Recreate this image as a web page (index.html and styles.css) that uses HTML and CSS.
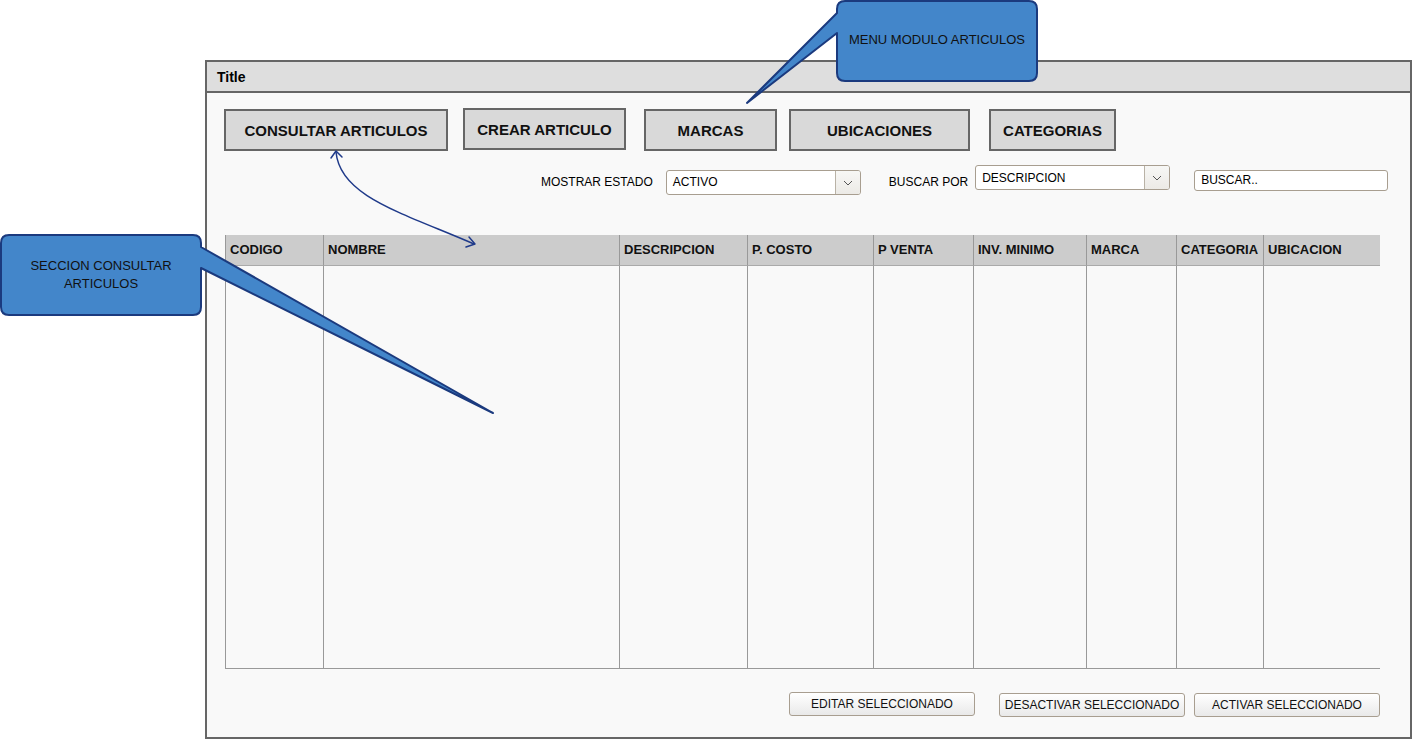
FILE: index.html
```html
<!DOCTYPE html>
<html lang="es">
<head>
<meta charset="utf-8">
<title>Articulos</title>
<link rel="stylesheet" href="styles.css">
</head>
<body>
<div class="canvas">
  <div class="window">
    <div class="titlebar">Title</div>
    <div class="win-body">
      <nav class="nav">
        <div class="nav-btn nav-consultar">CONSULTAR ARTICULOS</div>
        <div class="nav-btn nav-crear">CREAR ARTICULO</div>
        <div class="nav-btn nav-marcas">MARCAS</div>
        <div class="nav-btn nav-ubic">UBICACIONES</div>
        <div class="nav-btn nav-cat">CATEGORIAS</div>
      </nav>

      <div class="filters">
        <span class="flabel flabel-estado">MOSTRAR ESTADO</span>
        <div class="select select-estado">
          <span class="select-text">ACTIVO</span>
          <span class="select-arrow"><svg width="10" height="6" viewBox="0 0 10 6"><path d="M1 1 L5 5 L9 1" fill="none" stroke="#555" stroke-width="1"/></svg></span>
        </div>
        <span class="flabel flabel-buscar">BUSCAR POR</span>
        <div class="select select-buscar">
          <span class="select-text">DESCRIPCION</span>
          <span class="select-arrow"><svg width="10" height="6" viewBox="0 0 10 6"><path d="M1 1 L5 5 L9 1" fill="none" stroke="#555" stroke-width="1"/></svg></span>
        </div>
        <div class="search">BUSCAR..</div>
      </div>

      <div class="table">
        <div class="th">CODIGO</div>
        <div class="th">NOMBRE</div>
        <div class="th">DESCRIPCION</div>
        <div class="th">P. COSTO</div>
        <div class="th">P VENTA</div>
        <div class="th">INV. MINIMO</div>
        <div class="th">MARCA</div>
        <div class="th">CATEGORIA</div>
        <div class="th th-last">UBICACION</div>
        <div class="td"></div>
        <div class="td"></div>
        <div class="td"></div>
        <div class="td"></div>
        <div class="td"></div>
        <div class="td"></div>
        <div class="td"></div>
        <div class="td"></div>
        <div class="td td-last"></div>
      </div>

      <div class="actions">
        <div class="act-btn act-editar">EDITAR SELECCIONADO</div>
        <div class="act-btn act-desactivar">DESACTIVAR SELECCIONADO</div>
        <div class="act-btn act-activar">ACTIVAR SELECCIONADO</div>
      </div>
    </div>
  </div>

  <svg class="overlay" width="1412" height="739" viewBox="0 0 1412 739">
    <path class="callout-shape" d="M845 1 H1029 Q1037 1 1037 9 V73 Q1037 81 1029 81 H845 Q837 81 837 73 V33 L747 103 L837 13 V9 Q837 1 845 1 Z"/>
    <path class="callout-shape" d="M9 235 H193 Q201 235 201 243 V247 L493 413 L201 268 V307 Q201 315 193 315 H9 Q1 315 1 307 V243 Q1 235 9 235 Z"/>
    <path class="connector" d="M336 152 C340 196 400 212 474 244"/>
    <path class="connector" d="M331 158 L336 151 L342 157"/>
    <path class="connector" d="M466 247 L475 244 L469 237"/>
  </svg>

  <div class="callout-text callout-menu">MENU MODULO ARTICULOS</div>
  <div class="callout-text callout-seccion">SECCION CONSULTAR<br>ARTICULOS</div>
</div>
</body>
</html>
```

FILE: styles.css
```css
* { box-sizing: border-box; }

html, body {
  margin: 0;
  padding: 0;
  background: #ffffff;
}

body {
  font-family: "Liberation Sans", Arial, sans-serif;
  color: #000;
  width: 1412px;
  height: 739px;
  overflow: hidden;
}

.canvas {
  position: relative;
  width: 1412px;
  height: 739px;
  padding: 60px 0 0 205px;
}

.window {
  width: 1207px;
  height: 679px;
  border: 2px solid #666666;
  background: #f9f9f9;
  display: flex;
  flex-direction: column;
}

.titlebar {
  height: 31px;
  background: #dedede;
  border-bottom: 2px solid #666666;
  font-weight: bold;
  font-size: 14px;
  line-height: 29px;
  padding: 1px 0 0 10px;
}

.win-body {
  flex: 1;
  display: flex;
  flex-direction: column;
}

/* navigation buttons */
.nav {
  display: flex;
  align-items: flex-start;
  padding: 16px 0 0 17px;
}

.nav-btn {
  height: 42px;
  background: #d9d9d9;
  border: 2px solid #666666;
  font-weight: bold;
  font-size: 15px;
  display: flex;
  align-items: center;
  justify-content: center;
  color: #111;
}

.nav-consultar { width: 224px; }
.nav-crear { width: 163px; margin-left: 15px; margin-top: -1px; }
.nav-marcas { width: 133px; margin-left: 18px; }
.nav-ubic { width: 181px; margin-left: 12px; }
.nav-cat { width: 127px; margin-left: 19px; }

/* filters */
.filters {
  display: flex;
  align-items: flex-start;
  margin-top: 14px;
  padding-left: 334px;
  font-size: 12px;
  height: 30px;
}

.flabel {
  line-height: 24px;
  margin-top: 5px;
  white-space: nowrap;
}

.select {
  display: flex;
  height: 25px;
  width: 195px;
  border: 1px solid #a89e90;
  border-radius: 3px;
  background: #ffffff;
}

.select-estado { margin-left: 13px; margin-top: 5px; }
.flabel-buscar { margin-left: 28px; }
.select-buscar { margin-left: 7px; margin-top: 0; height: 25px; }

.select-text {
  flex: 1;
  padding-left: 6px;
  line-height: 23px;
}

.select-buscar .select-text { line-height: 24px; }

.select-arrow {
  width: 25px;
  border-left: 1px solid #b9b2a6;
  background: linear-gradient(#f7f7f5, #eceae6);
  border-radius: 0 2px 2px 0;
  display: flex;
  align-items: center;
  justify-content: center;
}

.search {
  margin-left: 24px;
  margin-top: 5px;
  width: 194px;
  height: 21px;
  border: 1px solid #a89e90;
  border-radius: 3px;
  background: #ffffff;
  padding-left: 6px;
  line-height: 19px;
}

/* table */
.table {
  margin: 40px 0 0 18px;
  width: 1155px;
  height: 434px;
  border-left: 1px solid #999999;
  border-bottom: 1px solid #999999;
  display: grid;
  grid-template-columns: 98px 296px 128px 126px 100px 113px 90px 87px 116px;
  grid-template-rows: 31px 1fr;
}

.th {
  background: #cccccc;
  border-right: 1px solid #999999;
  border-bottom: 1px solid #aaaaaa;
  font-weight: bold;
  font-size: 13px;
  line-height: 29px;
  padding-left: 4px;
  white-space: nowrap;
  color: #111;
}

.td {
  border-right: 1px solid #999999;
}

.th-last, .td-last { border-right: none; }

/* bottom actions */
.actions {
  display: flex;
  align-items: flex-start;
  margin-top: 23px;
  padding-left: 582px;
}

.act-btn {
  width: 186px;
  height: 24px;
  border: 1px solid #a89e90;
  border-radius: 3px;
  background: linear-gradient(#ffffff, #e9e9e9);
  font-size: 12px;
  line-height: 22px;
  text-align: center;
  color: #111;
  white-space: nowrap;
}

.act-desactivar { margin-left: 24px; margin-top: 1px; }
.act-activar { margin-left: 9px; margin-top: 1px; }

/* annotations */
.overlay {
  position: absolute;
  left: 0;
  top: 0;
  pointer-events: none;
}

.callout-shape {
  fill: #4386ca;
  stroke: #1b3a7e;
  stroke-width: 2;
  stroke-linejoin: round;
}

.connector {
  fill: none;
  stroke: #1f3a8a;
  stroke-width: 1.5;
  stroke-linecap: round;
  stroke-linejoin: round;
}

.callout-text {
  position: absolute;
  font-size: 13px;
  line-height: 18px;
  text-align: center;
  color: #111;
}

.callout-menu {
  left: 837px;
  top: 31px;
  width: 200px;
}

.callout-seccion {
  left: 1px;
  top: 257px;
  width: 200px;
}
```
